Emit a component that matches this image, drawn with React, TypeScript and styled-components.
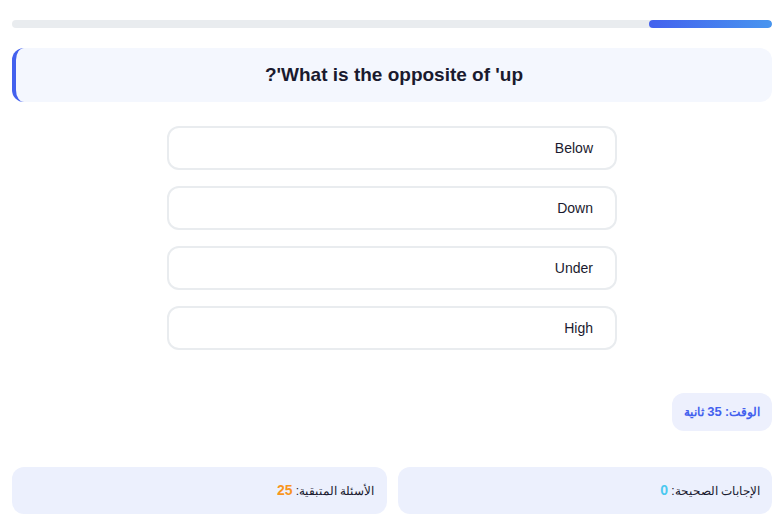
import React from 'react';
import styled, { createGlobalStyle } from 'styled-components';

const GlobalStyle = createGlobalStyle`
  body {
    margin: 0;
    background: #ffffff;
    font-family: "Liberation Sans", Arial, "Noto Sans", sans-serif;
    color: #1a1a2e;
  }
`;

const options = ['Below', 'Down', 'Under', 'High'];

const App = () => {
  const progress = 16.2;

  return (
    <>
      <GlobalStyle />
      <Page dir="rtl">
        <ProgressTrack>
          <ProgressFill style={{ width: `${progress}%` }} />
        </ProgressTrack>

        <QuestionCard>What is the opposite of 'up'?</QuestionCard>

        <OptionList>
          {options.map((option) => (
            <OptionButton key={option}>{option}</OptionButton>
          ))}
        </OptionList>

        <TimerRow>
          <Timer>
            الوقت: <strong>35</strong> ثانية
          </Timer>
        </TimerRow>

        <Stats>
          <StatCard>
            الإجابات الصحيحة: <StatValue color="#4cc9f0">0</StatValue>
          </StatCard>
          <StatCard>
            الأسئلة المتبقية: <StatValue color="#f8961e">25</StatValue>
          </StatCard>
        </Stats>
      </Page>
    </>
  );
};

export default App;

const Page = styled.div`
  padding: 20px 10px 0 12px;
  display: flex;
  flex-direction: column;
`;

const ProgressTrack = styled.div`
  height: 8px;
  background-color: #e9ecef;
  border-radius: 4px;
  overflow: hidden;
  display: flex;
`;

const ProgressFill = styled.div`
  height: 100%;
  border-radius: 4px;
  background: linear-gradient(to left, #4895ef, #4361ee);
`;

const QuestionCard = styled.div`
  margin-top: 20px;
  background-color: #f4f7fe;
  border-left: 4px solid #4361ee;
  border-radius: 12px;
  padding: 17px 16px;
  text-align: center;
  font-size: 19px;
  font-weight: 700;
  line-height: 20px;
  color: #1a1a2e;
`;

const OptionList = styled.div`
  margin: 24px auto 0;
  width: 450px;
  display: flex;
  flex-direction: column;
  gap: 16px;
`;

const OptionButton = styled.button`
  height: 44px;
  padding: 0 22px;
  border: 2px solid #e9ecef;
  border-radius: 12px;
  background-color: #ffffff;
  font-family: inherit;
  font-size: 14px;
  color: #1a1a2e;
  text-align: right;
  cursor: pointer;
`;

const TimerRow = styled.div`
  margin-top: 43px;
  display: flex;
`;

const Timer = styled.div`
  background-color: #edf0fd;
  color: #4361ee;
  border-radius: 12px;
  padding: 11px 12px;
  font-size: 12px;
  font-weight: 700;
  line-height: 16px;

  strong {
    font-size: 13px;
  }
`;

const Stats = styled.div`
  margin-top: 36px;
  display: grid;
  grid-template-columns: 1fr 1fr;
  gap: 11px;
`;

const StatCard = styled.div`
  background-color: #ecf0fd;
  border-radius: 12px;
  padding: 15px 12px;
  font-size: 12px;
  line-height: 16px;
  color: #1a1a2e;
`;

const StatValue = styled.span<{ color: string }>`
  color: ${({ color }) => color};
  font-weight: 700;
  font-size: 14px;
`;
